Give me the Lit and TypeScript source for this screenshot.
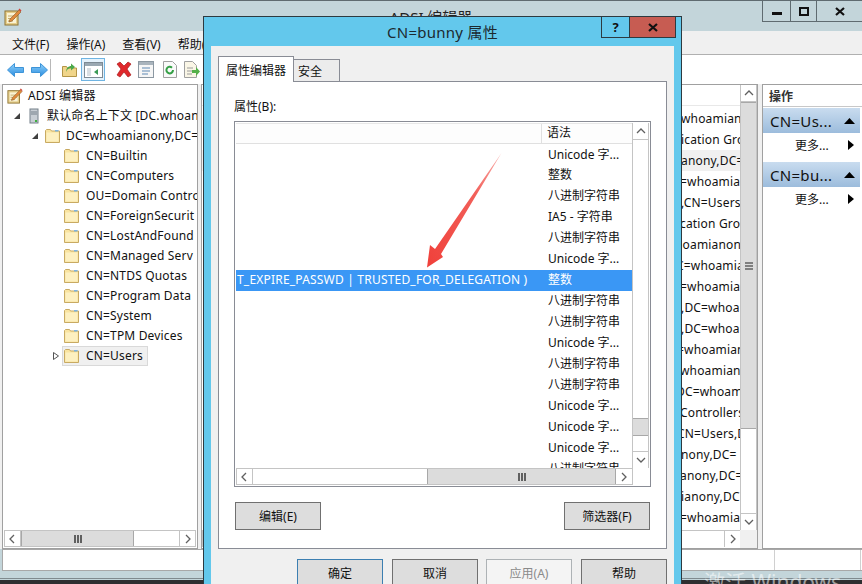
import { LitElement, html, css, svg } from "lit";
import { customElement } from "lit/decorators.js";

const treeItems = [
  "CN=Builtin",
  "CN=Computers",
  "OU=Domain Contro",
  "CN=ForeignSecurit",
  "CN=LostAndFound",
  "CN=Managed Serv",
  "CN=NTDS Quotas",
  "CN=Program Data",
  "CN=System",
  "CN=TPM Devices",
  "CN=Users",
];

// text and where it starts under the dialog edge (x = 682)
const middleRows: [string, number][] = [
  ["whoamianony", 1],
  ["ication Group", 1],
  ["anony,DC=", 1],
  ["=whoamianony", 0],
  [",CN=Users", 1],
  ["cation Group", 0],
  ["hoamianony", -5],
  ["C=whoamianony", -4],
  ["=whoamianony", 0],
  [",DC=whoamianony", 1],
  [",DC=whoamianony", 1],
  ["=whoamianony", -3],
  ["whoamianony", 0],
  ["DC=whoamianony", -4],
  ["Controllers", 0],
  ["CN=Users,DC", -3],
  ["nony,DC=", 1],
  ["anony,DC=", 0],
  ["ianony,DC", 1],
  ["=whoamianony", 0],
];

const syntaxRows = [
  "Unicode 字...",
  "整数",
  "八进制字符串",
  "IA5 - 字符串",
  "八进制字符串",
  "Unicode 字...",
  "整数",
  "八进制字符串",
  "八进制字符串",
  "Unicode 字...",
  "八进制字符串",
  "八进制字符串",
  "Unicode 字...",
  "Unicode 字...",
  "Unicode 字...",
  "八进制字符串",
];

const folderIcon = svg`<svg class="fi" width="15" height="14" viewBox="0 0 15 14">
  <path d="M.5 13.500V1.500l1-1h4l1 1.500h8v11.500z" fill="#f9e4a0" stroke="#c8aa62"/>
  <rect x="1.500" y="3.500" width="12" height="9" fill="#fdf0c0"/>
  <rect x="10" y="1" width="3.500" height="1.500" fill="#7db4e0"/>
</svg>`;

const notebookIcon = (s: number) => svg`<svg class="fi" width="${s}" height="${s}" viewBox="0 0 18 18">
  <rect x="1" y="3" width="13" height="14" fill="#e6cf8c" stroke="#8f7433"/>
  <rect x="3" y="5" width="9" height="10" fill="#faf3d6"/>
  <path d="M4 8h7M4 10.500h7M4 13h5" stroke="#c4ab6a"/>
  <path d="M5 14l1-3 9-9 2 2-9 9z" fill="#e08a3c" stroke="#8a5a2a" stroke-width=".6"/>
  <path d="M14.500 1.500l2 2 1-1-2-2z" fill="#d0453a"/>
</svg>`;

const triangleUp = svg`<svg width="11" height="6" viewBox="0 0 11 6"><path d="M0 6l5.500-6 5.500 6z" fill="#000"/></svg>`;
const triangleRight = svg`<svg width="6" height="10" viewBox="0 0 6 10"><path d="M0 0l6 5-6 5z" fill="#000"/></svg>`;

@customElement("app-root")
export class AppRoot extends LitElement {
  static styles = css`
    :host {
      display: block;
      width: 862px;
      height: 584px;
      position: relative;
      overflow: hidden;
      font-family: "Noto Sans", "Noto Sans CJK SC", sans-serif;
      font-size: 12px;
      color: #111;
      background: #c3d5da;
    }
    * { box-sizing: border-box; }
    .fi { flex: none; }
    .win {
      height: 579px;
      border-top: 1px solid #5f6b70;
      border-bottom: 1px solid #7f8a8e;
      display: flex;
      flex-direction: column;
    }
    .titlebar {
      height: 30px;
      flex: none;
      display: flex;
      justify-content: space-between;
      padding-left: 4px;
    }
    .titlebar .ico { padding-top: 7px; }
    .wintitle { flex: 1; text-align: center; font-size: 15px; line-height: 20px; padding: 6px 0 0 78px; color: #222; }
    .winctl { display: flex; height: 21px; border: 1px solid #5f6b70; border-top: 0; border-right: 0; align-self: flex-start; }
    .winctl div { display: flex; align-items: center; justify-content: center; border-right: 1px solid #5f6b70; }
    .winctl div:last-child { border-right: 0; }
    .menubar {
      height: 24px;
      flex: none;
      background: #f0f0f0;
      border-bottom: 1px solid #b0b0b0;
      display: flex;
      gap: 17px;
      padding: 4px 0 0 12px;
    }
    .toolbar {
      height: 29px;
      flex: none;
      background: #fff;
      display: flex;
      align-items: center;
      padding-left: 3px;
    }
    .toolbar .sep { width: 1px; height: 22px; background: #b8b8b8; margin: 0 6px 0 -1px; }
    .toolbar .tb { width: 24px; height: 23px; flex: none; display: flex; align-items: center; justify-content: center; }
    .toolbar .tb.on { border: 1px solid #6fb4e2; background: #e4f1fb; }
    .toolbar .gap7 { margin-left: 7px; }
    .toolbar .back2 { margin-left: -2px; }
    .content { height: 465px; flex: none; display: flex; padding-left: 2px; background: #f0f0f0; }
    .tree {
      width: 196px;
      border: 1px solid #a0a0a0;
      background: #fff;
      display: flex;
      flex-direction: column;
    }
    .tree-body { flex: 1; padding-top: 1px; overflow: hidden; white-space: nowrap; }
    .t-row { height: 20px; display: flex; align-items: center; gap: 4px; overflow: hidden; }
    .t-row .lbl { padding: 0 3px; height: 20px; line-height: 20px; letter-spacing: 0.17px; }
    .t-row .lbl.tight { padding-left: 0; }
    .t-row.root { padding-left: 4px; gap: 5px; }
    .t-row.ctx { padding-left: 10px; gap: 6px; }
    .t-row.dc { padding-left: 28px; gap: 6px; }
    .t-row.dc .lbl { padding-left: 0; }
    .t-row.item { padding-left: 61px; }
    .t-row.sel { padding-left: 49px; }
    .t-row.sel .wrap { display: flex; align-items: center; gap: 4px; background: #f0f0f0; border: 1px solid #d9d9d9; height: 20px; padding: 0 1px; margin-left: -2px; }
    .tw { width: 8px; height: 8px; flex: none; }
    .hscroll { height: 17px; display: flex; flex: none; border: 1px solid #c4c4c4; margin: 0 1px 1px 1px; background: #fff; }
    .sbtn { width: 16px; flex: none; display: flex; align-items: center; justify-content: center; background: #fff; border: 0 solid #c4c4c4; }
    .sbtn.rb { border-right-width: 1px; }
    .sbtn.lb { border-left-width: 1px; }
    .thumb { background: #dcdcdc; border: 1px solid #a8a8a8; border-width: 0 1px; display: flex; align-items: center; justify-content: center; }
    .thumb.tree-thumb { width: 113px; }
    .grow { flex: 1; }
    .middle {
      width: 557px;
      margin-left: 3px;
      border: 1px solid #a0a0a0;
      background: #fff;
      display: flex;
      flex-direction: column;
    }
    .mid-main { flex: 1; display: flex; min-height: 0; }
    .mid-list { flex: 1; min-width: 0; padding-top: 23px; overflow: hidden; white-space: nowrap; position: relative; letter-spacing: 0.17px; }
    .mid-list::before { content: ""; position: absolute; left: 0; right: 0; top: 20px; height: 1px; background: #e8e8e8; }
    .mid-list div { height: 21px; line-height: 21px; }
    .mid-list div.hl { background: #f0f0f0; }
    .mid-bottom { height: 18px; flex: none; display: flex; }
    .mid-track { flex: 1; display: flex; border: 1px solid #c4c4c4; border-right: 0; border-bottom: 0; height: 17px; }
    .corner { width: 17px; flex: none; background: #f0f0f0; }
    .vscroll { width: 17px; flex: none; display: flex; flex-direction: column; border-left: 1px solid #c4c4c4; border-right: 1px solid #c4c4c4; background: #fff; }
    .vscroll .sbtn { width: auto; height: 17px; }
    .vscroll .sbtn.top { border-bottom-width: 1px; }
    .vscroll .sbtn.end { border-top-width: 1px; }
    .vthumb { background: #dcdcdc; border: 1px solid #a8a8a8; border-width: 1px 0; display: flex; align-items: center; justify-content: center; }
    .vthumb.mid { height: 327px; }
    .vthumb.list { height: 18px; }
    .actions {
      width: 100px;
      margin-left: 4px;
      border: 1px solid #a0a0a0;
      border-right: 0;
      background: #fff;
      padding-right: 2px;
    }
    .act-head { height: 22px; padding: 2px 0 0 6px; border-bottom: 1px solid #c8c8c8; font-weight: bold; color: #333; margin-right: -2px; }
    .act-band {
      height: 25px;
      margin-top: 1px;
      background: linear-gradient(#c9dcef, #9cbcdc);
      display: flex;
      align-items: center;
      justify-content: space-between;
      padding: 0 5px 0 7px;
      font-size: 15px;
      letter-spacing: 0.3px;
    }
    .act-item { height: 28px; display: flex; align-items: center; justify-content: space-between; padding: 0 6px 4px 32px; }
    .statusbar {
      height: 22px;
      flex: none;
      margin-left: 2px;
      background: #fff;
      border: 1px solid #a8a8a8;
      border-right: 0;
      display: flex;
      justify-content: flex-end;
    }
    .statusbar div { width: 86px; border-left: 1px solid #d0d0d0; }
    .statusbar div:last-child { width: 2px; }
    .taskbar {
      position: absolute;
      left: 0;
      right: 0;
      bottom: 0;
      height: 4px;
      background: #2e2f31;
    }
    .watermark {
      position: absolute;
      left: 704px;
      top: 568px;
      font-size: 21px;
      line-height: 28px;
      color: rgba(255, 255, 255, 0.55);
      white-space: nowrap;
    }

    /* dialog */
    .dlg {
      position: absolute;
      left: 203px;
      top: 16px;
      width: 479px;
      height: 570px;
      background: #63c8ec;
      border: 1px solid #2d3a40;
      border-bottom: 0;
      padding: 29px 7px 0 7px;
    }
    .dlg-title { position: absolute; left: 0; right: 0; top: 5px; text-align: center; font-size: 15px; line-height: 20px; letter-spacing: 0.25px; color: #1c2a30; }
    .dlg-ctl { position: absolute; top: 0; right: 5px; display: flex; height: 21px; }
    .dlg-ctl .q { width: 28px; border: 1px solid #2d3a40; border-top: 0; border-right: 0; display: flex; align-items: center; justify-content: center; font-weight: bold; font-size: 13px; }
    .dlg-ctl .x { width: 47px; background: #c75c52; border: 1px solid #2d3a40; border-top: 0; display: flex; align-items: center; justify-content: center; }
    .dlg-body { background: #f0f0f0; height: 100%; padding: 10px 7px 0 7px; display: flex; flex-direction: column; }
    .tabs { display: flex; height: 25px; align-items: flex-end; position: relative; z-index: 1; flex: none; }
    .tab { border: 1px solid #898c95; border-bottom: 0; }
    .tab.on { width: 76px; height: 26px; background: #fff; padding: 4px 0 0 7px; margin-bottom: -1px; }
    .tab.off { width: 46px; height: 22px; background: #ececec; border-left: 0; padding: 2px 0 0 4px; }
    .panel { height: 468px; background: #fff; border: 1px solid #898c95; flex: none; padding: 16px 15px 0 15px; }
    .plabel { height: 23px; line-height: 18px; }
    .plist { height: 366px; border: 1px solid #898c95; padding: 1px; display: flex; flex-direction: column; width: 417px; }
    .plist-main { flex: 1; min-height: 0; display: flex; }
    .pcols { flex: 1; min-width: 0; display: flex; flex-direction: column; overflow: hidden; }
    .phead { height: 21px; flex: none; background: #fdfdfd; border-top: 1px solid #e8e8e8; border-bottom: 1px solid #e0e0e0; display: flex; }
    .phead .c1 { width: 306px; border-right: 1px solid #e0e0e0; }
    .phead .c2 { padding: 1px 0 0 5px; line-height: 16px; }
    .prows { padding-top: 0.5px; flex: 1; overflow: hidden; }
    .prow { height: 20.95px; line-height: 20.95px; display: flex; white-space: nowrap; }
    .prow .c1 { width: 307px; overflow: hidden; flex: none; color: #fff; padding-left: 1px; letter-spacing: 0.2px; }
    .prow .c2 { padding-left: 5px; }
    .prow.sel { background: #3a97f5; color: #fff; }
    .spacer { height: 278px; flex: none; }
    .phs { height: 17px; flex: none; display: flex; border: 1px solid #c4c4c4; margin-right: 16px; }
    .phs .blank { width: 174px; flex: none; }
    .pbtns { display: flex; justify-content: space-between; padding: 15px 1px 0 1px; width: 417px; }
    .btn { width: 86px; height: 28px; background: #dddddd; border: 1px solid #707070; display: flex; align-items: center; justify-content: center; }
    .btn.def { border-color: #3c7fb1; }
    .btn.dis { background: #f4f4f4; border-color: #adb2b5; color: #8a8a8a; margin-left: -1px; }
    .dlg-foot { display: flex; gap: 9px; justify-content: flex-end; padding-top: 10px; }
    .arrow { position: absolute; left: 0; top: 0; pointer-events: none; }
  `;

  private chevron(dir: "l" | "r" | "u" | "d") {
    const d = {
      l: "M7 2L3 6l4 4",
      r: "M4 2l4 4-4 4",
      u: "M2 8l4-4 4 4",
      d: "M2 4l4 4 4-4",
    }[dir];
    return svg`<svg width="12" height="12" viewBox="0 0 12 12"><path d=${d} fill="none" stroke="#606060" stroke-width="1.3"/></svg>`;
  }

  private grip(vertical = true) {
    return vertical
      ? svg`<svg width="8" height="8" viewBox="0 0 8 8"><path d="M1 0v8M4 0v8M7 0v8" stroke="#606060" stroke-width="2"/></svg>`
      : svg`<svg width="8" height="8" viewBox="0 0 8 8"><path d="M0 1h8M0 4h8M0 7h8" stroke="#606060" stroke-width="1.4"/></svg>`;
  }

  private toolbarIcons() {
    return html`
      <div class="tb"><svg width="17" height="14" viewBox="0 0 17 14"><defs><linearGradient id="ab" x1="0" y1="0" x2="0" y2="1"><stop offset="0" stop-color="#8ed0fa"/><stop offset="1" stop-color="#2b8de0"/></linearGradient></defs><path d="M.5 7l7-6.500v4h9v5h-9v4z" fill="url(#ab)" stroke="#3d94d8"/></svg></div>
      <div class="tb"><svg width="17" height="14" viewBox="0 0 17 14"><path d="M16.500 7l-7-6.500v4h-9v5h9v4z" fill="url(#ab)" stroke="#3d94d8"/></svg></div>
      <div class="sep"></div>
      <div class="tb"><svg width="15" height="15" viewBox="0 0 15 15"><path d="M.5 14.500V4.500h4l1 1.500h9v8.500z" fill="#f0d58a" stroke="#b39546"/><path d="M4 10c0-4 3-6 5-6V1.500l4 3.500-4 3.500V6c-2 0-4 1-5 4z" fill="#4aa84a"/></svg></div>
      <div class="tb on"><svg width="19" height="16" viewBox="0 0 19 16"><rect x=".5" y=".5" width="18" height="15" fill="#fff" stroke="#7d8a94"/><rect x="1" y="1" width="17" height="3" fill="#9aa8b2"/><rect x="3" y="6" width="4" height="8" fill="#d8dee3"/><path d="M14 7v6l-4-3z" fill="#3a9a55"/></svg></div>
      <div class="tb gap7"><svg width="18" height="17" viewBox="0 0 18 17"><path d="M2 3l3-2 4 4 4-4 3 2-4 5 4 6-3 2-4-5-4 5-3-2 4-6z" fill="#e0282c" stroke="#a81c1c" stroke-width=".7"/></svg></div>
      <div class="tb back2"><svg width="16" height="17" viewBox="0 0 16 17"><rect x=".5" y=".5" width="15" height="16" fill="#f6f6f6" stroke="#8c98a2"/><rect x="1" y="1" width="14" height="3" fill="#a9b4bd"/><path d="M4 7h8M4 10h8M4 13h6" stroke="#5e89b4"/></svg></div>
      <div class="tb"><svg width="14" height="17" viewBox="0 0 14 17"><path d="M.5.5h9l4 4v12H.5z" fill="#fafafa" stroke="#a0a0a0"/><path d="M10 9a3.300 3.300 0 1 1-1-2.300" fill="none" stroke="#35a046" stroke-width="2"/></svg></div>
      <div class="tb back2"><svg width="16" height="17" viewBox="0 0 16 17"><path d="M.5.5h8l4 4v12H.500z" fill="#faf6e6" stroke="#a0a0a0"/><path d="M3 7h6M3 10h5M3 13h5" stroke="#9a9a9a"/><path d="M8 9h4V6l4 4.500L12 15v-3H8z" fill="#55b04a"/></svg></div>
    `;
  }

  render() {
    return html`
      <div class="win">
        <div class="titlebar">
          <div class="ico">${notebookIcon(18)}</div>
          <div class="wintitle">ADSI 编辑器</div>
          <div class="winctl">
            <div style="width:28px"><svg width="10" height="10" viewBox="0 0 10 10"><rect y="6" width="10" height="3" fill="#111"/></svg></div>
            <div style="width:26px"><svg width="10" height="9" viewBox="0 0 10 9"><rect x="1" y="1" width="8" height="7" fill="none" stroke="#111" stroke-width="2"/></svg></div>
            <div style="width:45px"><svg width="10" height="9" viewBox="0 0 10 9"><path d="M1 1l8 7M9 1L1 8" stroke="#111" stroke-width="2.200"/></svg></div>
          </div>
        </div>
        <div class="menubar">
          <span>文件(F)</span><span>操作(A)</span><span>查看(V)</span><span>帮助(H)</span>
        </div>
        <div class="toolbar">${this.toolbarIcons()}</div>
        <div class="content">
          <div class="tree">
            <div class="tree-body">
              <div class="t-row root">${notebookIcon(16)}<span class="lbl tight">ADSI 编辑器</span></div>
              <div class="t-row ctx">
                <svg class="tw" viewBox="0 0 8 8"><path d="M7 1v6H1z" fill="#404040"/></svg>
                <svg class="fi" width="14" height="16" viewBox="0 0 14 16"><rect x="3" y="1" width="8" height="14" fill="#c8ced4" stroke="#75808a"/><path d="M4 4h6M4 6h6" stroke="#75808a"/><rect x="8" y="12" width="2" height="2" fill="#40b040"/></svg>
                <span class="lbl tight">默认命名上下文 [DC.whoan</span>
              </div>
              <div class="t-row dc">
                <svg class="tw" viewBox="0 0 8 8"><path d="M7 1v6H1z" fill="#404040"/></svg>
                ${folderIcon}
                <span class="lbl">DC=whoamianony,DC=</span>
              </div>
              ${treeItems.map((t, i) =>
                i === treeItems.length - 1
                  ? html`<div class="t-row sel">
                      <svg class="tw" viewBox="0 0 8 8"><path d="M1.500.500l5 3.500-5 3.500z" fill="#fff" stroke="#555"/></svg>
                      <div class="wrap">${folderIcon}<span class="lbl">${t}</span></div>
                    </div>`
                  : html`<div class="t-row item">${folderIcon}<span class="lbl">${t}</span></div>`
              )}
            </div>
            <div class="hscroll">
              <div class="sbtn rb">${this.chevron("l")}</div>
              <div class="thumb tree-thumb">${this.grip()}</div>
              <div class="grow"></div>
              <div class="sbtn lb">${this.chevron("r")}</div>
            </div>
          </div>
          <div class="middle">
            <div class="mid-main">
              <div class="mid-list">
                ${middleRows.map(
                  ([t, dx], i) =>
                    html`<div class=${i === 2 ? "hl" : ""} style="padding-left:${478 + dx}px">${t}</div>`
                )}
              </div>
              <div class="vscroll">
                <div class="sbtn top">${this.chevron("u")}</div>
                <div class="vthumb mid">${this.grip(false)}</div>
                <div class="grow"></div>
                <div class="sbtn end">${this.chevron("d")}</div>
              </div>
            </div>
            <div class="mid-bottom">
              <div class="mid-track">
                <div class="grow"></div>
                <div class="sbtn lb">${this.chevron("r")}</div>
              </div>
              <div class="corner"></div>
            </div>
          </div>
          <div class="actions">
            <div class="act-head">操作</div>
            <div class="act-band"><span>CN=Us...</span>${triangleUp}</div>
            <div class="act-item"><span>更多...</span>${triangleRight}</div>
            <div class="act-band"><span>CN=bu...</span>${triangleUp}</div>
            <div class="act-item"><span>更多...</span>${triangleRight}</div>
          </div>
        </div>
        <div class="statusbar"><div></div><div></div></div>
      </div>
      <div class="taskbar"></div>
      <div class="watermark">激活 Windows</div>

      <div class="dlg">
        <div class="dlg-title">CN=bunny 属性</div>
        <div class="dlg-ctl">
          <div class="q">?</div>
          <div class="x"><svg width="10" height="9" viewBox="0 0 10 9"><path d="M1 1l8 7M9 1L1 8" stroke="#111" stroke-width="2.200"/></svg></div>
        </div>
        <div class="dlg-body">
          <div class="tabs">
            <div class="tab on">属性编辑器</div>
            <div class="tab off">安全</div>
          </div>
          <div class="panel">
            <div class="plabel">属性(B):</div>
            <div class="plist">
              <div class="plist-main">
                <div class="pcols">
                  <div class="phead"><div class="c1"></div><div class="c2">语法</div></div>
                  <div class="prows">
                    ${syntaxRows.map(
                      (t, i) => html`
                        <div class="prow ${i === 6 ? "sel" : ""}">
                          <div class="c1">${i === 6 ? "T_EXPIRE_PASSWD | TRUSTED_FOR_DELEGATION )" : ""}</div>
                          <div class="c2">${t}</div>
                        </div>`
                    )}
                  </div>
                </div>
                <div class="vscroll">
                  <div class="sbtn top">${this.chevron("u")}</div>
                  <div class="spacer"></div>
                  <div class="vthumb list"></div>
                  <div class="grow"></div>
                  <div class="sbtn end">${this.chevron("d")}</div>
                </div>
              </div>
              <div class="phs">
                <div class="sbtn rb">${this.chevron("l")}</div>
                <div class="blank"></div>
                <div class="thumb grow">${this.grip()}</div>
                <div class="sbtn">${this.chevron("r")}</div>
              </div>
            </div>
            <div class="pbtns">
              <div class="btn">编辑(E)</div>
              <div class="btn">筛选器(F)</div>
            </div>
          </div>
          <div class="dlg-foot">
            <div class="btn def">确定</div>
            <div class="btn">取消</div>
            <div class="btn dis">应用(A)</div>
            <div class="btn">帮助</div>
          </div>
        </div>
      </div>
      <svg class="arrow" width="862" height="584" viewBox="0 0 862 584">
        <defs>
          <linearGradient id="ar" x1="1" y1="0" x2="0" y2="1">
            <stop offset="0" stop-color="#f9b0ac"/>
            <stop offset="0.35" stop-color="#f2605a"/>
            <stop offset="1" stop-color="#f0403a"/>
          </linearGradient>
        </defs>
        <path d="M501.500 153L441 254L443 257L427 267.500L430 245L435 249z" fill="url(#ar)"/>
      </svg>
    `;
  }
}
